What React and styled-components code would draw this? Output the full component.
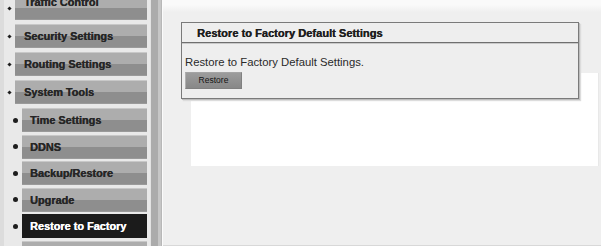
import React from "react";
import styled, { createGlobalStyle } from "styled-components";

const Global = createGlobalStyle`
  html, body { margin: 0; padding: 0; background: #efefef; }
  body { width: 601px; height: 246px; overflow: hidden; font-family: "Liberation Sans", Arial, sans-serif; }
`;

const Page = styled.div`
  display: flex;
  width: 601px;
  height: 246px;
  overflow: hidden;
`;

const Sidebar = styled.nav`
  width: 150px;
  flex: none;
  background: linear-gradient(to right, #dcdcdc 0 4px, #e9e9e9 4px 100%);
  overflow: hidden;
`;

const MenuList = styled.ul`
  list-style: none;
  margin: -4px 0 0 0;
  padding: 0 3px 0 0;
  display: flex;
  flex-direction: column;
`;

const MenuRow = styled.li`
  display: flex;
  align-items: center;
  height: 24px;
  flex: none;
  margin-top: ${(p) => p.$gap}px;
  padding-left: ${(p) => (p.$sub ? 13 : 8)}px;
`;

const Bullet = styled.span`
  flex: none;
  width: ${(p) => (p.$sub ? 5 : 3)}px;
  height: ${(p) => (p.$sub ? 5 : 3)}px;
  border-radius: ${(p) => (p.$sub ? "50%" : "0")};
  background: #1e1e1e;
  margin-right: 4px;
  visibility: ${(p) => (p.$hidden ? "hidden" : "visible")};
  transform: ${(p) => (p.$sub ? "none" : "rotate(45deg)")};
`;

const MenuItem = styled.div`
  flex: 1;
  height: 100%;
  display: flex;
  align-items: ${(p) => (p.$clipped ? "flex-start" : "center")};
  padding-left: ${(p) => (p.$sub ? 8 : 9)}px;
  font-size: 10.9px;
  font-weight: bold;
  color: ${(p) => (p.$active ? "#ffffff" : "#262626")};
  text-shadow: 0.35px 0 0 ${(p) => (p.$active ? "#ffffff" : "#262626")};
  background: ${(p) =>
    p.$active
      ? "#1b1b1b"
      : "linear-gradient(to bottom, #c8c8c8 0 1px, #adadad 1px 50%, #8e8e8e 50% 100%)"};
  box-shadow: ${(p) => (p.$active ? "none" : "inset 0 -1px 0 #9a9a9a")};
  white-space: nowrap;
  line-height: 12px;
`;

const Divider = styled.div`
  width: 13px;
  flex: none;
  background: linear-gradient(to right, #e2e2e2 0 1px, #ababab 1px 8px, #c6c6c6 8px 11px, #b8b8b8 11px 12px, #fbfbfb 12px 13px);
`;

const Main = styled.main`
  flex: 1;
  background: linear-gradient(to bottom, #fafafa 0 5px, #efefef 12px);
  border-bottom: 1px solid #d8d8d8;
  padding-top: 22px;
`;

const Card = styled.section`
  position: relative;
  z-index: 1;
  margin-left: 18px;
  width: 396px;
  height: 75px;
  background: #eeeeee;
  border: 1px solid #7a7a7a;
  box-shadow: 1px 1px 0 #bdbdbd, 2px 2px 1px #dcdcdc;
`;

const CardHeader = styled.header`
  height: 19px;
  border-bottom: 1px solid #6f6f6f;
  box-shadow: 0 1px 0 #c9c9c9;
  display: flex;
  align-items: center;
  padding-left: 15px;
  font-size: 11.1px;
  font-weight: bold;
  color: #1e1e1e;
  text-shadow: 0.3px 0 0 #1e1e1e;
`;

const CardBody = styled.div`
  padding: 13px 0 0 3px;
  display: flex;
  flex-direction: column;
  align-items: flex-start;
  gap: 3px;
`;

const BodyText = styled.p`
  margin: 0;
  font-size: 11.3px;
  color: #2a2a2a;
  line-height: 13px;
`;

const Button = styled.button`
  width: 57px;
  height: 17px;
  padding: 0 0 2px 0;
  font-family: "Liberation Sans", Arial, sans-serif;
  font-size: 8.5px;
  color: #141414;
  background: linear-gradient(to bottom, #9c9c9c, #888888);
  border: none;
  border-left: 1px solid #b0b0b0;
  border-top: 1px solid #a4a4a4;
  border-bottom: 1px solid #808080;
  border-right: 1px solid #808080;
  display: flex;
  align-items: center;
  justify-content: center;
`;

const WhitePanel = styled.div`
  margin-top: -26px;
  margin-left: 28px;
  width: 407px;
  height: 93px;
  background: #ffffff;
  border-right: 1px solid #e8e8e8;
`;

const topItems = ["Traffic Control", "Security Settings", "Routing Settings", "System Tools"];
const subItems = ["Time Settings", "DDNS", "Backup/Restore", "Upgrade", "Restore to Factory", ""];

export default function App() {
  return (
    <>
      <Global />
      <Page>
        <Sidebar>
          <MenuList>
            {topItems.map((t, i) => (
              <MenuRow key={t} $gap={i === 0 ? 0 : 4}>
                <Bullet />
                <MenuItem $clipped={i === 0}>{t}</MenuItem>
              </MenuRow>
            ))}
            {subItems.map((t, i) => (
              <MenuRow key={i} $sub $gap={i === 0 ? 4 : 2.5}>
                <Bullet $sub $hidden={!t} />
                <MenuItem $sub $active={t === "Restore to Factory"}>{t}</MenuItem>
              </MenuRow>
            ))}
          </MenuList>
        </Sidebar>
        <Divider />
        <Main>
          <Card>
            <CardHeader>Restore to Factory Default Settings</CardHeader>
            <CardBody>
              <BodyText>Restore to Factory Default Settings.</BodyText>
              <Button>Restore</Button>
            </CardBody>
          </Card>
          <WhitePanel />
        </Main>
      </Page>
    </>
  );
}
